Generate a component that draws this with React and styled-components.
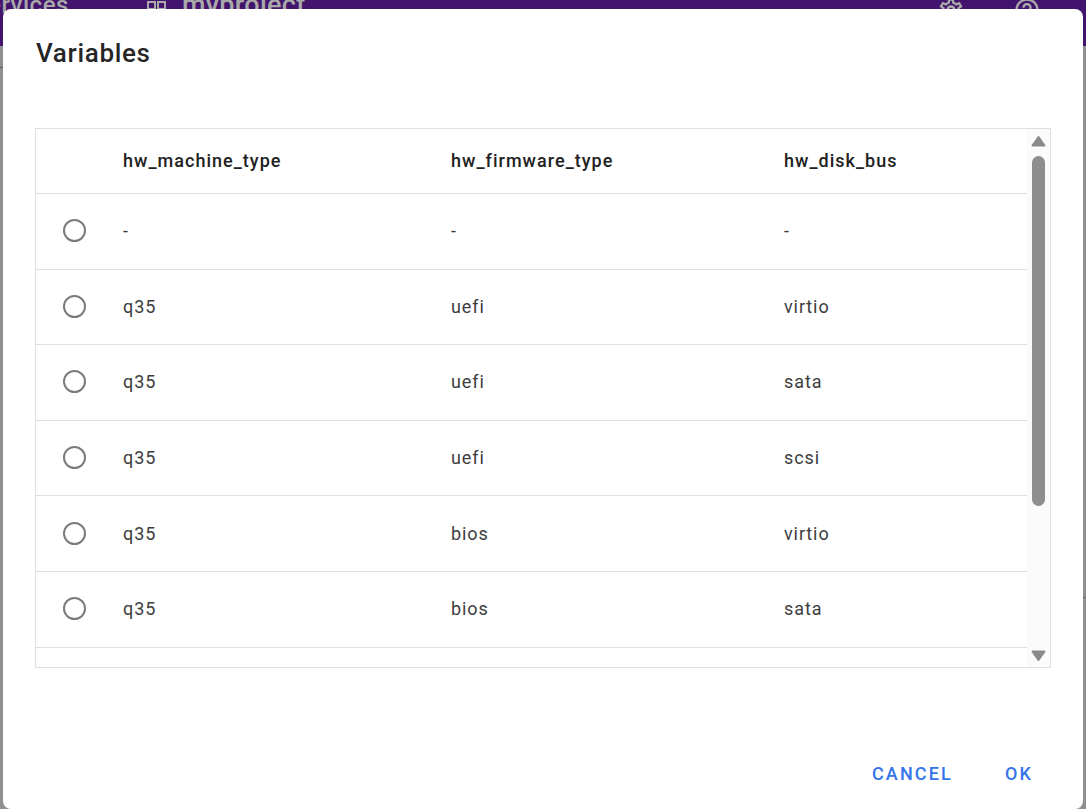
import React from "react";
import styled, { createGlobalStyle } from "styled-components";
import { MdOutlineSettings, MdHelpOutline } from "react-icons/md";

const Global = createGlobalStyle`
  html, body { margin: 0; padding: 0; height: 100%; overflow: hidden; }
  body { font-family: Roboto, "Liberation Sans", sans-serif; background: #8f8f8f; }
`;
const Page = styled.div`
  position: relative;
  width: 1086px;
  height: 809px;
  overflow: hidden;
  background:
    linear-gradient(#555, #555) 0 67px / 3px 1px no-repeat,
    linear-gradient(#666, #666) 1083px 597px / 3px 1px no-repeat,
    #8f8f8f;
`;
const AppBar = styled.header`
  height: 46px;
  background: #42146e;
  color: #a9a9a9;
  display: flex;
  align-items: flex-end;
  box-sizing: border-box;
  padding-bottom: 27px;
  font-size: 27px;
  font-weight: 500;
  line-height: 28px;
  letter-spacing: 0.3px;
`;
const BarTitle = styled.span`
  margin-left: -27px;
  width: 174px;
  flex: none;
  font-size: 24px;
  letter-spacing: 0.5px;
`;
const Project = styled.span`
  display: flex;
  align-items: flex-end;
  gap: 15px;
  flex: 1;
`;
const GridIcon = styled.svg`
  display: block;
  margin-bottom: 8px;
`;
const BarIcons = styled.span`
  display: flex;
  gap: 47.5px;
  margin: 0 45.5px -5px 0;
  align-items: center;
  font-size: 28px;
`;
const Dialog = styled.section`
  position: absolute;
  left: 3px;
  top: 9px;
  width: 1080px;
  height: 800px;
  background: #fff;
  border-radius: 8px;
  display: flex;
  flex-direction: column;
  box-sizing: border-box;
`;
const Title = styled.h2`
  margin: 0;
  padding: 28px 33px 59px;
  font-size: 26px;
  line-height: 32px;
  font-weight: 500;
  color: #000;
  opacity: 0.85;
  letter-spacing: 0.67px;
  height: 32px;
  box-sizing: content-box;
  flex: none;
`;
const TableFrame = styled.div`
  margin-left: 32px;
  width: 1016px;
  height: 540px;
  box-sizing: border-box;
  border: 1px solid #e0e0e0;
  display: flex;
  overflow: hidden;
  flex: none;
`;
const TableClip = styled.div`
  flex: 1;
  overflow: hidden;
`;
const Table = styled.table`
  width: 991px;
  table-layout: fixed;
  border-collapse: collapse;
`;
const Head = styled.th`
  height: 64.5px;
  padding: 0 0 2px;
  box-sizing: border-box;
  text-align: left;
  font-size: 18px;
  font-weight: 500;
  letter-spacing: 1.03px;
  color: #212121;
  border-bottom: 1px solid #e0e0e0;
  width: ${(p) => p.$w}px;
`;
const Cell = styled.td`
  height: 75.6px;
  padding: 0 0 1px;
  box-sizing: border-box;
  border-bottom: 1px solid #e0e0e0;
`;
const CellText = styled.span`
  font-size: 18px;
  letter-spacing: 0.9px;
  color: #212121;
  opacity: 0.87;
`;
const Radio = styled.span`
  display: block;
  width: 23px;
  height: 23px;
  margin-left: 26.5px;
  box-sizing: border-box;
  border: 2px solid #7b7b7b;
  border-radius: 50%;
`;
const Scrollbar = styled.div`
  width: 23px;
  flex: none;
  background: #fbfbfb;
  display: flex;
  flex-direction: column;
  align-items: center;
`;
const Arrow = styled.svg`
  display: block;
  width: 17px;
  height: 12px;
  flex: none;
  fill: #8a8a8a;
  stroke: #8a8a8a;
  stroke-width: 2;
  stroke-linejoin: round;
`;
const ArrowUp = styled(Arrow)`
  margin-top: 6px;
`;
const Thumb = styled.div`
  width: 13px;
  height: 350px;
  margin-top: 9px;
  background: #8e8e8e;
  border-radius: 7px;
  flex: none;
`;
const ArrowDown = styled(Arrow)`
  margin-top: auto;
  margin-bottom: 5px;
`;
const Actions = styled.div`
  margin-top: auto;
  display: flex;
  justify-content: flex-end;
  padding: 0 34px 17px 0;
  gap: 20px;
`;
const ActionButton = styled.button`
  border: 0;
  background: transparent;
  font-family: inherit;
  font-size: 18px;
  font-weight: 500;
  letter-spacing: 2.15px;
  line-height: 24px;
  color: #2a6de8;
  opacity: 0.95;
  padding: 6px 16px;
  height: 36px;
`;

const rows = [
  ["-", "-", "-"],
  ["q35", "uefi", "virtio"],
  ["q35", "uefi", "sata"],
  ["q35", "uefi", "scsi"],
  ["q35", "bios", "virtio"],
  ["q35", "bios", "sata"],
  ["q35", "bios", "scsi"],
];

export default function App() {
  return (
    <Page>
      <Global />
      <AppBar>
        <BarTitle>Services</BarTitle>
        <Project>
          <GridIcon width="20" height="20" viewBox="0 0 20 20" fill="none" stroke="#a9a9a9" strokeWidth="2">
            <rect x="1" y="1" width="7" height="7" />
            <rect x="11" y="1" width="7" height="7" />
            <rect x="1" y="11" width="7" height="7" />
            <rect x="11" y="11" width="7" height="7" />
          </GridIcon>
          myproject
        </Project>
        <BarIcons>
          <MdOutlineSettings />
          <MdHelpOutline />
        </BarIcons>
      </AppBar>
      <Dialog role="dialog" aria-label="Variables">
        <Title>Variables</Title>
        <TableFrame>
          <TableClip>
            <Table>
              <thead>
                <tr>
                  <Head $w={87} />
                  <Head $w={328}>hw_machine_type</Head>
                  <Head $w={333}>hw_firmware_type</Head>
                  <Head $w={243}>hw_disk_bus</Head>
                </tr>
              </thead>
              <tbody>
                {rows.map((r, i) => (
                  <tr key={i}>
                    <Cell><Radio /></Cell>
                    {r.map((c, j) => (
                      <Cell key={j}><CellText>{c}</CellText></Cell>
                    ))}
                  </tr>
                ))}
              </tbody>
            </Table>
          </TableClip>
          <Scrollbar>
            <ArrowUp viewBox="0 0 17 12">
              <path d="M8.5 2 L14.5 10.5 L2.5 10.5 Z" />
            </ArrowUp>
            <Thumb />
            <ArrowDown viewBox="0 0 17 12">
              <path d="M2.5 1.5 L14.5 1.5 L8.5 10 Z" />
            </ArrowDown>
          </Scrollbar>
        </TableFrame>
        <Actions>
          <ActionButton>CANCEL</ActionButton>
          <ActionButton>OK</ActionButton>
        </Actions>
      </Dialog>
    </Page>
  );
}
